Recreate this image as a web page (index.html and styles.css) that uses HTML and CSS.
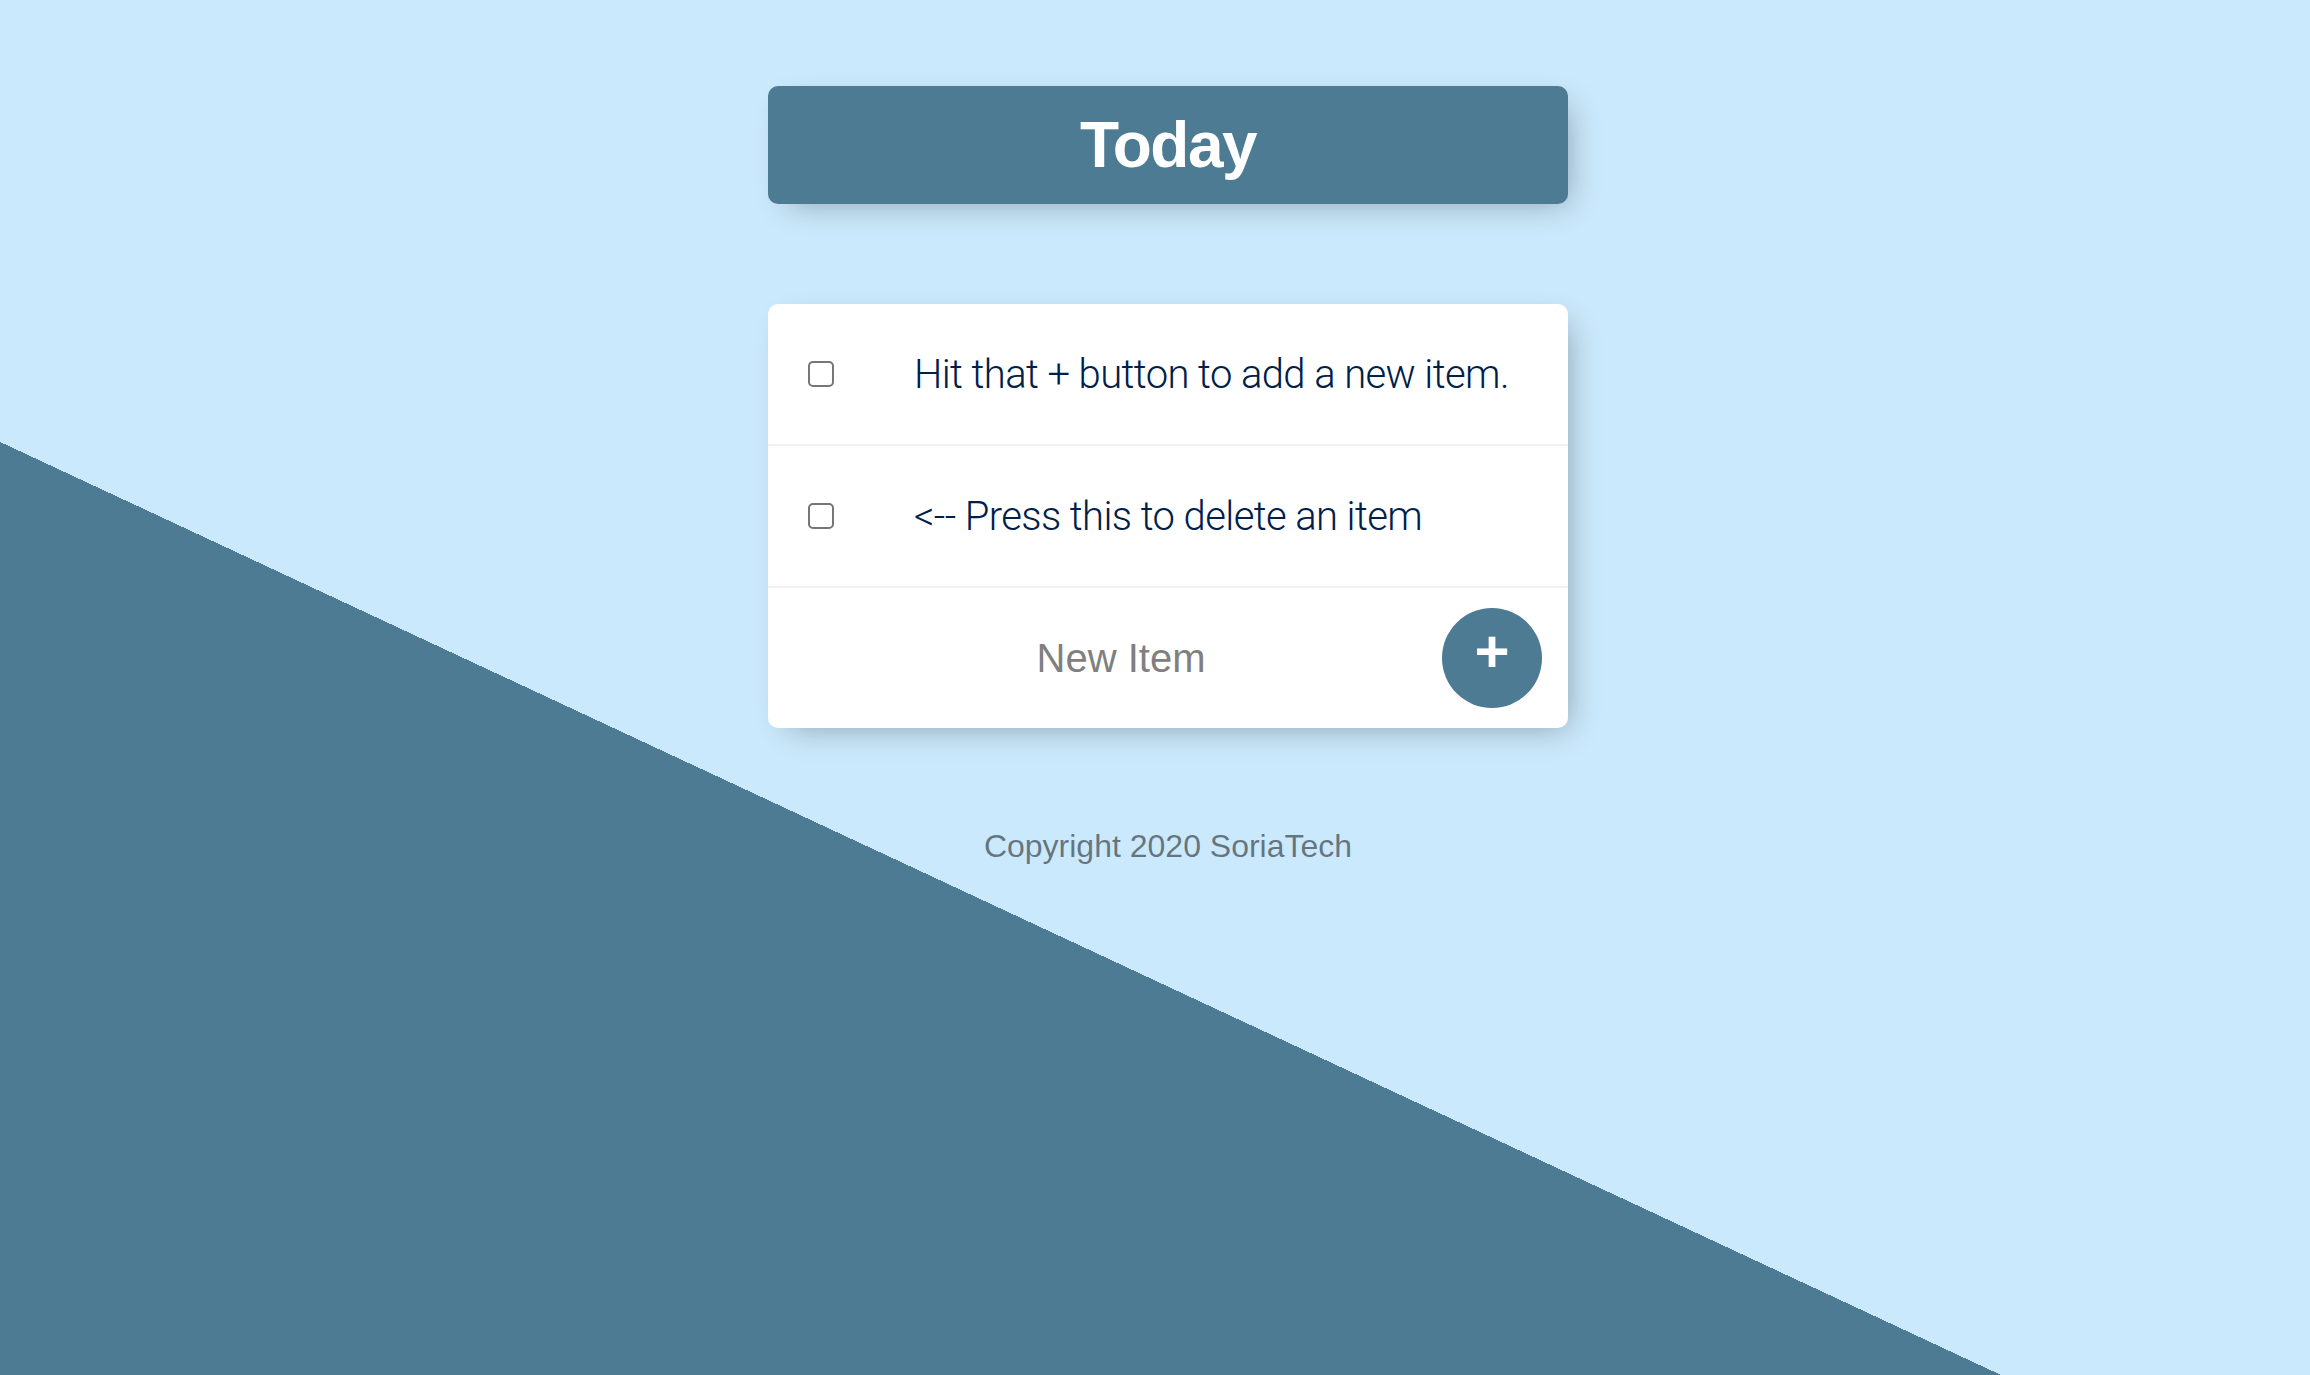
FILE: index.html
```html
<!DOCTYPE html>
<html lang="en">
<head>
<meta charset="utf-8">
<title>To Do List</title>
<link rel="stylesheet" href="styles.css">
</head>
<body>
  <div class="box heading">
    <h1>Today</h1>
  </div>
  <div class="box list">
    <div class="item">
      <input type="checkbox" class="check">
      <p>Hit that + button to add a new item.</p>
    </div>
    <div class="item">
      <input type="checkbox" class="check">
      <p>&lt;-- Press this to delete an item</p>
    </div>
    <form class="item add-form">
      <input type="text" class="new-item" placeholder="New Item" autocomplete="off">
      <button type="button" class="add-btn">+</button>
    </form>
  </div>
  <footer class="footer">Copyright 2020 SoriaTech</footer>
</body>
</html>
```
FILE: styles.css
```css
html {
  min-height: 100%;
  background-color: #cbe9fc;
  background-image: linear-gradient(25deg, #4c7b93 50%, #cbe9fc 50%);
  background-size: 2310px 1961px;
  background-position: 0 0;
  background-repeat: no-repeat;
}

body {
  margin: 0;
  padding: 86px 0 0 26px;
  font-family: "Liberation Sans", Arial, sans-serif;
}

.box {
  max-width: 800px;
  margin: 0 auto 100px;
  background: #ffffff;
  border-radius: 10px;
  box-shadow: 10px 10px 30px -10px rgba(0, 0, 0, 0.3);
}

.heading {
  background-color: #4c7b93;
  text-align: center;
}

.heading h1 {
  margin: 0;
  padding: 20px;
  color: #ffffff;
  font-size: 64px;
  line-height: 78px;
  font-weight: 700;
  letter-spacing: -1.5px;
}

.item {
  min-height: 140px;
  display: flex;
  align-items: center;
  border-bottom: 2px solid #f1f1f1;
}

.item:last-child {
  border-bottom: 0;
}

.check {
  appearance: none;
  -webkit-appearance: none;
  flex: none;
  width: 26px;
  height: 26px;
  margin: 0 40px;
  border: 2px solid #767676;
  border-radius: 5px;
  background: #ffffff;
}

.item p {
  margin: 0;
  padding: 40px;
  font-family: Roboto, "Liberation Sans", sans-serif;
  font-size: 40px;
  font-weight: 300;
  letter-spacing: -0.6px;
  white-space: nowrap;
  color: #00204a;
}

.add-form {
  margin: 0;
  padding-left: 40px;
  gap: 8px;
}

.new-item {
  width: 626px;
  height: 120px;
  padding: 0;
  border: none;
  outline: none;
  text-align: center;
  font-family: "Liberation Sans", Arial, sans-serif;
  font-size: 40px;
  color: #333333;
  background: transparent;
}

.new-item::placeholder {
  color: #808080;
  opacity: 1;
}

.add-btn {
  width: 100px;
  height: 100px;
  padding: 0 0 12px;
  border: 0;
  border-radius: 50%;
  background-color: #4c7b93;
  color: #ffffff;
  font-family: "Liberation Sans", Arial, sans-serif;
  font-size: 60px;
  font-weight: 700;
  line-height: 1;
}

.footer {
  text-align: center;
  color: rgba(0, 0, 0, 0.5);
  font-size: 32px;
}
```
